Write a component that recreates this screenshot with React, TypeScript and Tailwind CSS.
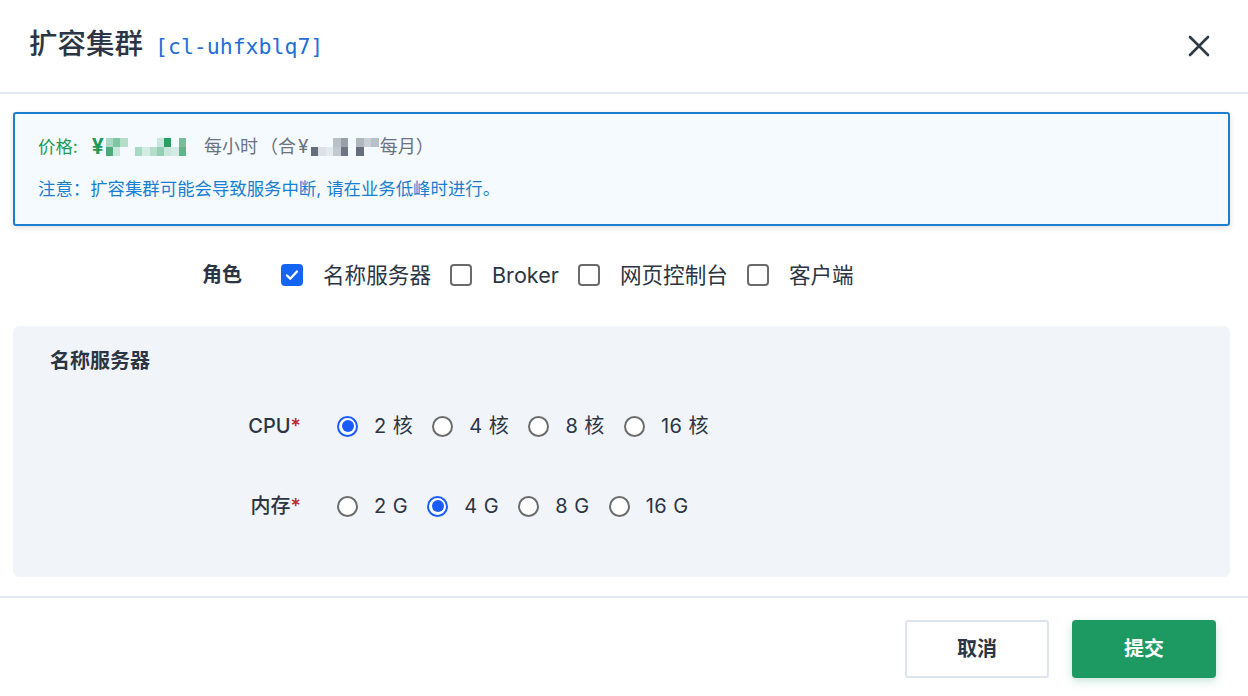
import { useState } from "react";

const FONT = "font-['Inter','Noto_Sans_CJK_SC',sans-serif]";

// 打码的价格块
const greenCells = [
  [0.35, 0.55, 0.3, 0, 0, 0, 0, 0.2, 0.95, 0, 0.6],
  [0.8, 0.2, 0, 0, 0.35, 0.15, 0.3, 0.45, 0.2, 0.15, 0.7],
];
const grayCells = [
  [0, 0, 0, 0.35, 0.55, 0, 0.4, 0.25, 0.35],
  [0.85, 0.15, 0.1, 0.3, 0.8, 0, 0.85, 0, 0],
];

function Mosaic({ cells, color, cell }: { cells: number[][]; color: string; cell: string }) {
  return (
    <span className="inline-flex flex-col align-middle">
      {cells.map((row, i) => (
        <span key={i} className="flex">
          {row.map((o, j) => (
            <span
              key={j}
              className={`block h-[9px] ${cell}`}
              style={{ backgroundColor: color, opacity: o }}
            />
          ))}
        </span>
      ))}
    </span>
  );
}

function Checkbox({ checked, label, onClick }: { checked: boolean; label: string; onClick: () => void }) {
  return (
    <button type="button" onClick={onClick} className="flex items-center gap-5 mr-[19px]">
      <span
        className={`w-[22px] h-[22px] rounded-[4px] flex items-center justify-center ${
          checked ? "bg-[#1565f5]" : "border-2 border-[#6b6b6b] bg-white"
        }`}
      >
        {checked && (
          <svg width="16" height="16" viewBox="0 0 16 16" fill="none">
            <path d="M3 8.5l3.2 3.2L13 4.5" stroke="white" strokeWidth="2.4" strokeLinecap="round" strokeLinejoin="round" />
          </svg>
        )}
      </span>
      <span className="text-[21.6px] text-[#2b3544]">{label}</span>
    </button>
  );
}

function Radio({ checked, label, onClick }: { checked: boolean; label: string; onClick: () => void }) {
  return (
    <button type="button" onClick={onClick} className="flex items-center gap-4 mr-[19px]">
      <span
        className={`w-[21px] h-[21px] rounded-full flex items-center justify-center bg-white border-2 ${
          checked ? "border-[#1a5cff]" : "border-[#6b6b6b]"
        }`}
      >
        {checked && <span className="w-[12px] h-[12px] rounded-full bg-[#1a5cff]" />}
      </span>
      <span className="text-[20px] text-[#2b3544] tracking-[0.5px]">{label}</span>
    </button>
  );
}

export default function App() {
  const [roles, setRoles] = useState<Record<string, boolean>>({
    名称服务器: true,
    Broker: false,
    网页控制台: false,
    客户端: false,
  });
  const [cpu, setCpu] = useState("2 核");
  const [mem, setMem] = useState("4 G");

  return (
    <div className={`w-[1248px] h-[696px] bg-white flex flex-col ${FONT}`}>
      {/* header */}
      <div className="h-[94px] border-b-2 border-[#e3e8ef] flex items-center justify-between pl-[29px] pr-[38px] shrink-0">
        <div className="flex items-baseline gap-3 -mt-[4px]">
          <span className="text-[28.5px] font-medium text-[#2b3544]">扩容集群</span>
          <span className="text-[21.5px] text-[#1f6fd6] font-['DejaVu_Sans_Mono',monospace]">[cl-uhfxblq7]</span>
        </div>
        <button type="button" aria-label="Close" className="text-[#2d3a4a]">
          <svg width="22" height="22" viewBox="0 0 22 22" fill="none">
            <path d="M2 2l18 18M20 2L2 20" stroke="currentColor" strokeWidth="2.6" strokeLinecap="round" />
          </svg>
        </button>
      </div>

      {/* alert */}
      <div className="ml-[13px] mr-[18px] mt-[18px] h-[114px] border-2 border-[#1a7fd0] bg-[#f5fafe] rounded-[3px] shadow-[0_2px_6px_rgba(0,0,0,0.12)] pl-[23px] pt-[20px] text-[17.4px] leading-[26px]">
        <div className="flex items-center">
          <span className="text-[#1e9a58]">价格:</span>
          <span className="text-[#1e9a58] font-bold ml-[14px] mr-[2px] text-[21px]">¥</span>
          <Mosaic cells={greenCells} color="#1e9a58" cell="w-[7.3px]" />
          <span className="text-[#6b7280] ml-[18px] text-[18px]">每小时</span>
          <span className="text-[#6b7280] ml-[2px] text-[18px]">（合</span>
          <span className="text-[#6b7280] ml-[2px] mr-[2px] text-[19px]">¥</span>
          <Mosaic cells={grayCells} color="#4b5563" cell="w-[7.6px]" />
          <span className="text-[#6b7280] ml-[1px] text-[18px]">每月）</span>
        </div>
        <div className="text-[#1a7fd0] mt-[16px]">注意：扩容集群可能会导致服务中断, 请在业务低峰时进行。</div>
      </div>

      {/* roles */}
      <div className="flex items-center h-[50px] mt-[24px] pl-[202px]">
        <span className="text-[20px] font-bold text-[#2b3544] w-[79px]">角色</span>
        {Object.keys(roles).map((r) => (
          <Checkbox
            key={r}
            label={r}
            checked={roles[r]}
            onClick={() => setRoles((prev) => ({ ...prev, [r]: !prev[r] }))}
          />
        ))}
      </div>

      {/* panel */}
      <div className="ml-[13px] mr-[18px] mt-[26px] h-[251px] bg-[#f1f4f9] rounded-[6px] pl-[37px] pt-[20px]">
        <div className="text-[20px] font-bold text-[#2b3544] leading-[30px]">名称服务器</div>
        <div className="flex items-center h-[40px] mt-[30px]">
          <span className="w-[287px] pr-[36px] text-right text-[20px] font-medium text-[#2b3544]">
            CPU<span className="text-[#c0262d]">*</span>
          </span>
          {["2 核", "4 核", "8 核", "16 核"].map((o) => (
            <Radio key={o} label={o} checked={cpu === o} onClick={() => setCpu(o)} />
          ))}
        </div>
        <div className="flex items-center h-[40px] mt-[40px]">
          <span className="w-[287px] pr-[36px] text-right text-[20px] font-medium text-[#2b3544]">
            内存<span className="text-[#c0262d]">*</span>
          </span>
          {["2 G", "4 G", "8 G", "16 G"].map((o) => (
            <Radio key={o} label={o} checked={mem === o} onClick={() => setMem(o)} />
          ))}
        </div>
      </div>

      {/* footer */}
      <div className="mt-[19px] border-t-2 border-[#e3e8ef] flex justify-end gap-[23px] pr-[32px] pt-[22px]">
        <button
          type="button"
          className="w-[144px] h-[58px] border-2 border-[#dde4ee] bg-white rounded-[3px] text-[20px] font-bold text-[#2b3544]"
        >
          取消
        </button>
        <button
          type="button"
          className="w-[144px] h-[58px] bg-[#1d9a62] rounded-[4px] text-[20px] font-bold text-white shadow-[0_3px_8px_rgba(29,154,98,0.25)]"
        >
          提交
        </button>
      </div>
    </div>
  );
}
